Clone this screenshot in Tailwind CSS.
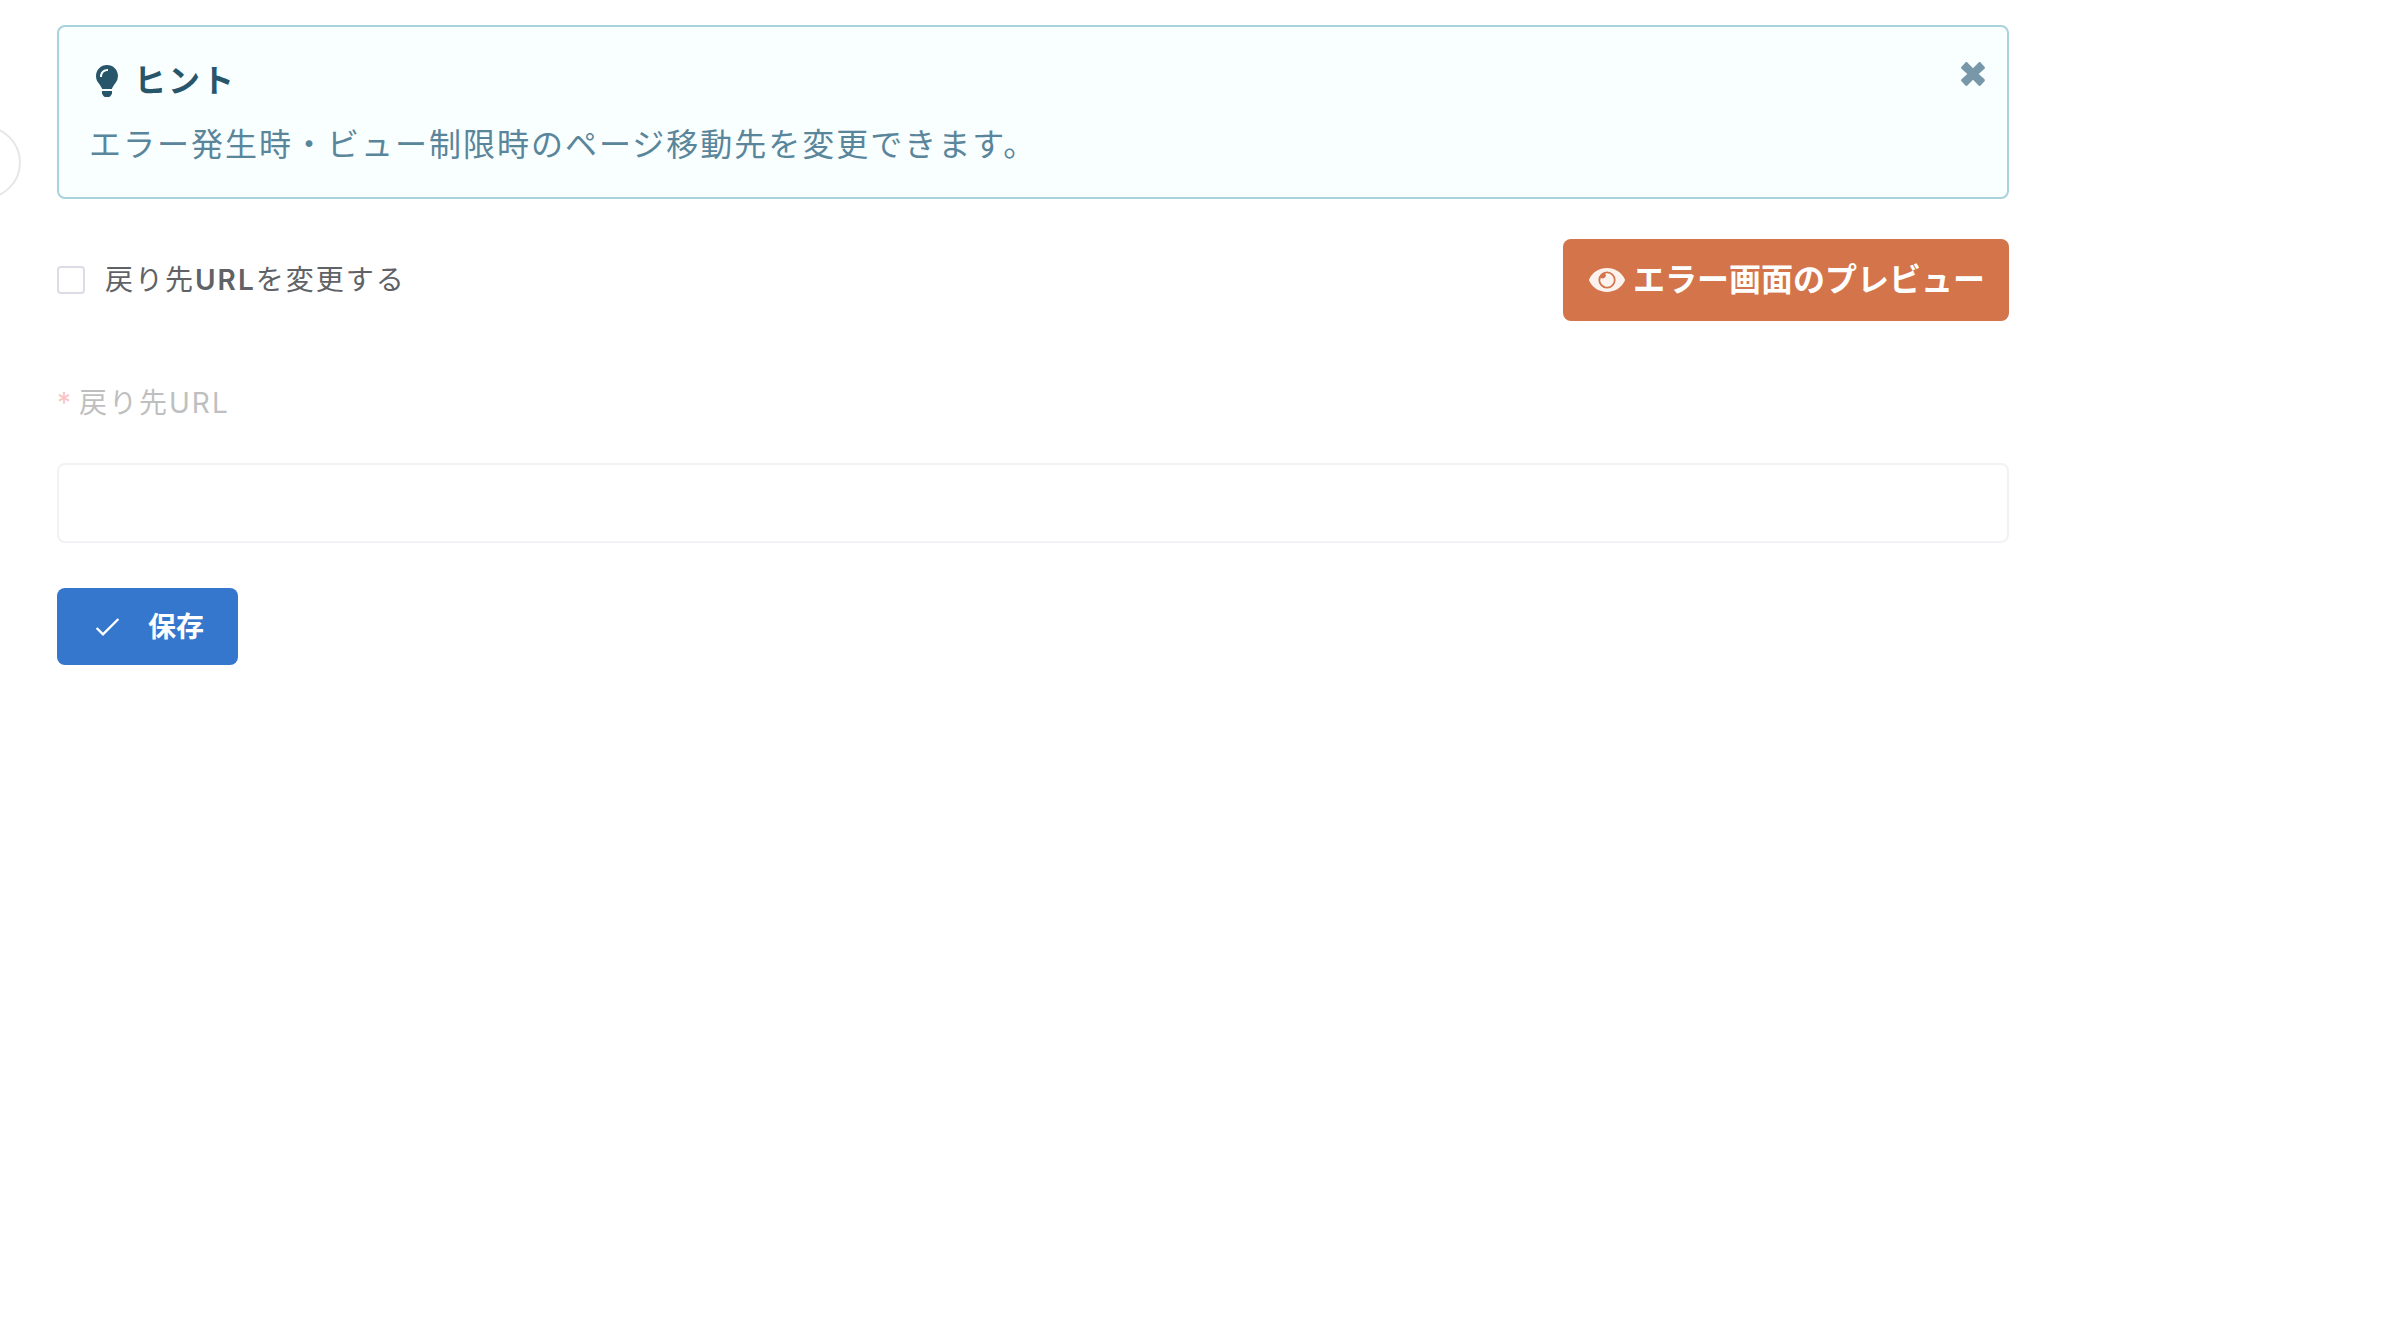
<!DOCTYPE html>
<html lang="ja">
<head>
    <meta charset="UTF-8">
    <meta name="viewport" content="width=device-width, initial-scale=1.0">
    <title>戻り先URL設定</title>
    <script src="https://cdn.jsdelivr.net/npm/@tailwindcss/browser@4"></script>
</head>
<body class="relative min-h-screen overflow-x-hidden bg-white font-[Inter,'Noto_Sans_CJK_JP',sans-serif]">
    <!-- サイドバー開閉ボタン -->
    <button type="button" aria-label="メニューを開く" class="absolute -left-[52px] top-[126px] size-[73px] rounded-full border-2 border-[#e6e6e6] bg-white"></button>

    <main class="pt-[25px] pr-[376px] pl-[57px]">
        <!-- ヒント -->
        <section id="hint" class="flex items-start justify-between rounded-lg border-2 border-[#a9d2dc] bg-[#f9ffff] pt-[30px] pr-[22px] pb-7 pl-[30px]">
            <div>
                <h2 class="flex items-center gap-4 text-[32px] leading-[48px] font-bold tracking-[2px] text-[#27566b]">
                    <svg class="ml-[7px] h-8 w-[22px]" viewBox="0 0 22 32" fill="currentColor" aria-hidden="true">
                        <path fill-rule="evenodd" d="M11 0C4.900 0 0 4.900 0 11c0 2.800 1 5.300 2.700 7.200 1.200 1.400 2.700 3.800 3.500 5.800h9.600c.8-2 2.300-4.400 3.500-5.800A11 11 0 0 0 22 11C22 4.900 17.100 0 11 0zm1 4v2c-4 0-6 2.200-6 6H4c0-5 3-8 8-8z"/>
                        <path d="M6 26h10v2.300c0 .5-.2.900-.5 1.300l-1 1.500c-.4.600-1 .9-1.700.9H9.200c-.7 0-1.300-.3-1.700-.9l-1-1.500c-.3-.4-.5-.8-.5-1.300z"/>
                    </svg>
                    ヒント
                </h2>
                <p class="mt-4 text-[32px] leading-[48px] tracking-[2px] text-[#5a869b]">エラー発生時・ビュー制限時のページ移動先を変更できます。</p>
            </div>
            <button type="button" id="closeHint" aria-label="閉じる" class="mt-[5px] text-[#7898aa]">
                <svg class="size-6" viewBox="0 0 24 24" fill="currentColor">
                    <path d="M17.700 12l5.800-5.300c.6-.6.6-1.500 0-2L19.600.5c-.6-.6-1.500-.6-2 0L12 6.300 6.400.5c-.5-.6-1.400-.6-2 0L.5 4.700c-.6.500-.6 1.400 0 2L6.300 12 .5 17.300c-.6.6-.6 1.500 0 2l3.900 4.200c.6.600 1.500.600 2 0L12 17.700l5.600 5.800c.5.600 1.400.600 2 0l3.900-4.200c.6-.5.6-1.400 0-2z"/>
                </svg>
            </button>
        </section>

        <div class="mt-10 flex items-center justify-between">
            <label class="flex items-center gap-5 text-[28px] leading-10 tracking-[2px] text-[#606266]">
                <input type="checkbox" id="changeUrl" class="size-7 appearance-none rounded border-2 border-[#dcdde4] bg-white checked:bg-[#3577cd]">
                <span>戻り先<span class="font-semibold">URL</span>を変更する</span>
            </label>
            <button type="button" class="flex h-[82px] items-center gap-2 rounded-lg bg-[#d3744b] pr-6 pl-[26px] text-[32px] leading-[48px] font-bold text-white">
                <svg class="h-6 w-9" viewBox="0 0 36 24" fill="currentColor" fill-opacity=".9" aria-hidden="true">
                    <path fill-rule="evenodd" d="M18 0C10 0 3.500 4.400.3 10.900a2.400 2.400 0 0 0 0 2.200C3.500 19.600 10 24 18 24s14.500-4.400 17.700-10.900a2.400 2.400 0 0 0 0-2.200C32.500 4.400 26 0 18 0zm0 3.400a8.600 8.600 0 1 1 0 17.200 8.600 8.600 0 0 1 0-17.200z"/>
                    <path d="M18 5.200c-.6 0-1.200.1-1.700.2a3.200 3.200 0 0 1-4.600 4.300A6.800 6.800 0 1 0 18 5.200z"/>
                </svg>
                エラー画面のプレビュー
            </button>
        </div>

        <form id="urlForm">
            <label for="returnUrl" class="mt-[62px] flex gap-1.5 text-[28px] leading-10 tracking-[2px] text-[#bfbfc0]">
                <span class="text-[#f8c4c4]">*</span>
                <span>戻り先URL</span>
            </label>
            <input type="text" id="returnUrl" disabled class="mt-10 block h-20 w-full rounded-lg border-2 border-[#f1f1f6] bg-white px-7 text-[28px]">
            <button type="submit" class="mt-[45px] flex h-[77px] items-center gap-7 rounded-lg bg-[#3577cd] pr-[34px] pl-[38px] text-[28px] leading-10 font-bold text-white">
                <svg class="h-5 w-[25px]" viewBox="0 0 25 20" fill="none" stroke="currentColor" stroke-width="2.400" aria-hidden="true">
                    <path d="M1.600 11 8 17.300 23.400 2"/>
                </svg>
                保存
            </button>
        </form>
    </main>

    <script>
        const changeUrl = document.getElementById('changeUrl');
        const returnUrl = document.getElementById('returnUrl');

        // チェック時のみURLを入力可能にする
        changeUrl.addEventListener('change', () => {
            returnUrl.disabled = !changeUrl.checked;
        });

        document.getElementById('closeHint').addEventListener('click', () => {
            document.getElementById('hint').remove();
        });

        document.getElementById('urlForm').addEventListener('submit', (e) => {
            e.preventDefault();
        });
    </script>
</body>
</html>
